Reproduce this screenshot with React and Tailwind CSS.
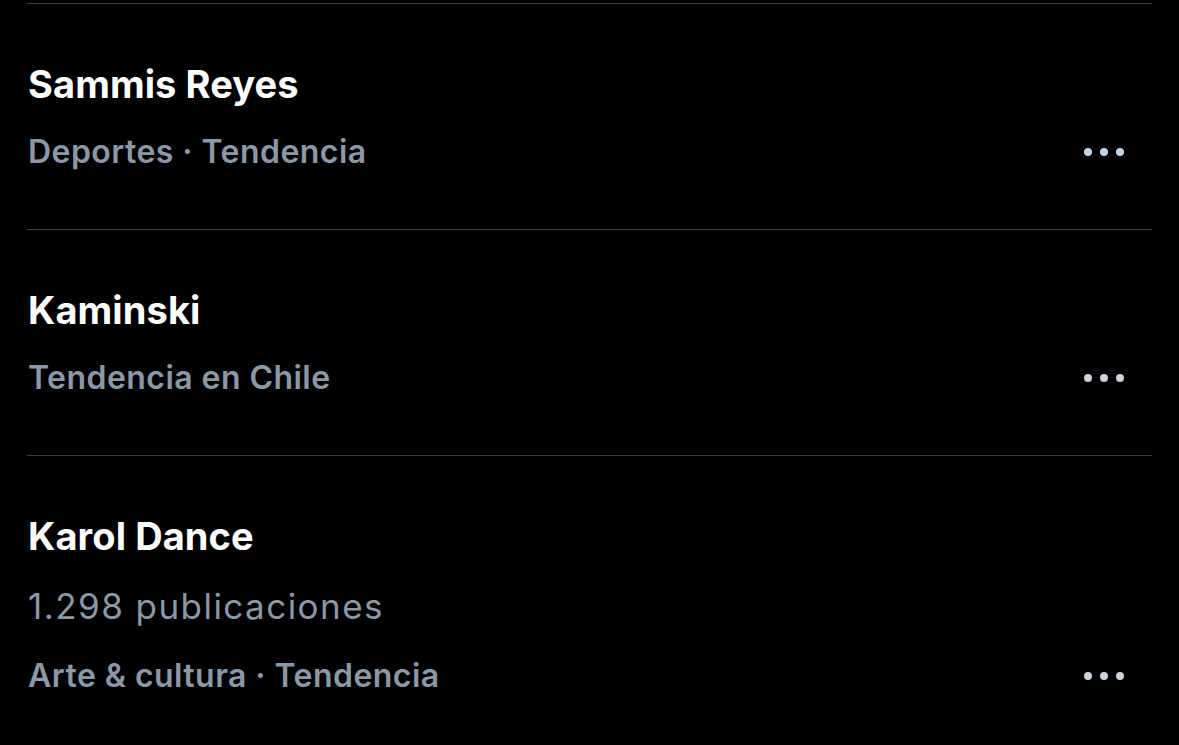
import { Fragment } from 'react';

const trends = [
  { title: 'Sammis Reyes', lines: [], meta: 'Deportes · Tendencia' },
  { title: 'Kaminski', lines: [], meta: 'Tendencia en Chile' },
  { title: 'Karol Dance', lines: ['1.298 publicaciones'], meta: 'Arte & cultura · Tendencia' },
];

function Dots() {
  return (
    <div className="flex items-center gap-[8px]">
      <span className="block h-[8px] w-[8px] rounded-full bg-[#c9d3dc]" />
      <span className="block h-[8px] w-[8px] rounded-full bg-[#c9d3dc]" />
      <span className="block h-[8px] w-[8px] rounded-full bg-[#c9d3dc]" />
    </div>
  );
}

function TrendRow({ trend }) {
  return (
    <div className="pt-[58px] pb-[55px] pl-[28px] pr-[28px]">
      <div className="text-[38px] font-bold leading-[44px] text-white tracking-[0.1px]">{trend.title}</div>
      {trend.lines.map((l) => (
        <div key={l} className="mt-[26px] text-[35px] font-normal leading-[44px] tracking-[1.45px] text-[#8b98a5]">
          {l}
        </div>
      ))}
      <div className={`flex items-center justify-between ${trend.lines.length ? 'mt-[26px]' : 'mt-[24px]'}`}>
        <span className="text-[32px] font-semibold leading-[44px] text-[#8b98a5] tracking-[0.45px]">{trend.meta}</span>
        <Dots />
      </div>
    </div>
  );
}

export default function App() {
  return (
    <div
      className="min-h-[745px] w-[1179px] overflow-hidden bg-black pt-[3px]"
      style={{ fontFamily: 'Inter, "Noto Sans", sans-serif' }}
    >
      <div className="w-[1152px]">
        {trends.map((t) => (
          <Fragment key={t.title}>
            <div className="ml-[27px] h-px bg-[#3a3d41]" />
            <TrendRow trend={t} />
          </Fragment>
        ))}
      </div>
    </div>
  );
}
